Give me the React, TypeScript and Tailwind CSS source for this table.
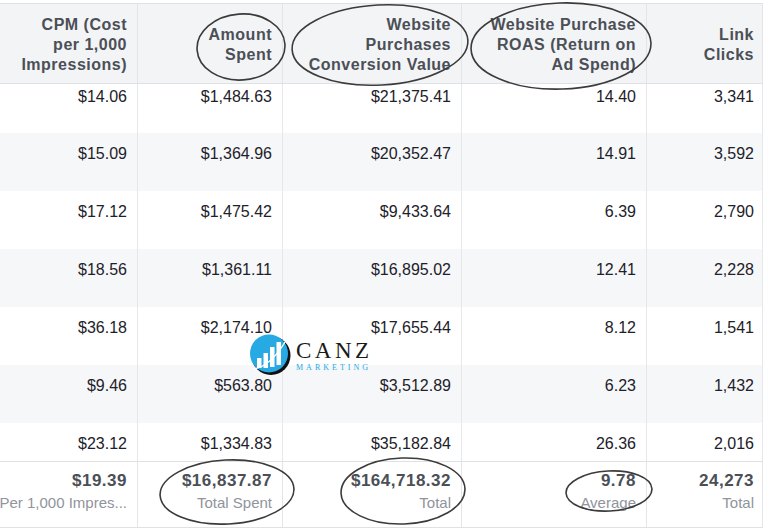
import React from 'react';

const cols = ['w-[138px]', 'w-[145px]', 'w-[179px]', 'w-[185px]', 'w-[116px]'];

const headers: string[][] = [
  ['CPM (Cost', 'per 1,000', 'Impressions)'],
  ['Amount', 'Spent'],
  ['Website', 'Purchases', 'Conversion Value'],
  ['Website Purchase', 'ROAS (Return on', 'Ad Spend)'],
  ['Link', 'Clicks'],
];

const rows: string[][] = [
  ['$14.06', '$1,484.63', '$21,375.41', '14.40', '3,341'],
  ['$15.09', '$1,364.96', '$20,352.47', '14.91', '3,592'],
  ['$17.12', '$1,475.42', '$9,433.64', '6.39', '2,790'],
  ['$18.56', '$1,361.11', '$16,895.02', '12.41', '2,228'],
  ['$36.18', '$2,174.10', '$17,655.44', '8.12', '1,541'],
  ['$9.46', '$563.80', '$3,512.89', '6.23', '1,432'],
  ['$23.12', '$1,334.83', '$35,182.84', '26.36', '2,016'],
];

const totals: [string, string][] = [
  ['$19.39', 'Per 1,000 Impres...'],
  ['$16,837.87', 'Total Spent'],
  ['$164,718.32', 'Total'],
  ['9.78', 'Average'],
  ['24,273', 'Total'],
];

// row heights: first row is partly scrolled under the header, last one is cut by the footer
const rowBox = (i: number) =>
  i === 0 ? 'h-[49px] pt-[4px]' : i === rows.length - 1 ? 'h-[38px] pt-[12px]' : 'h-[58px] pt-[12px]';

function Logo() {
  return (
    <div className="absolute left-[248px] top-[334px] flex items-center gap-[4px]">
      <svg width="44" height="42" viewBox="0 0 44 42">
        <circle cx="23" cy="21.5" r="19.5" fill="#111" />
        <circle cx="21" cy="19.5" r="19" fill="#27a9e3" />
        <rect x="9" y="24" width="4.5" height="10" fill="#fff" />
        <rect x="15.5" y="19" width="4.5" height="15" fill="#fff" />
        <rect x="22" y="13" width="4.5" height="20" fill="#fff" />
        <rect x="28.5" y="8" width="4.5" height="23" fill="#fff" />
        <path d="M5 35 Q22 33 37 8" stroke="#fff" strokeWidth="1.4" fill="none" />
      </svg>
      <div className="flex flex-col items-start font-['Liberation_Serif',serif] leading-none">
        <span className="text-[23px] tracking-[3.5px] text-[#1a1a1a]">CANZ</span>
        <span className="mt-[2px] text-[8px] tracking-[3px] text-[#27a9e3]">MARKETING</span>
      </div>
    </div>
  );
}

function Marks() {
  return (
    <svg
      className="pointer-events-none absolute left-0 top-0"
      width="768"
      height="528"
      viewBox="0 0 768 528"
      fill="none"
      stroke="#3b3b3b"
      strokeWidth="1.6"
    >
      <ellipse cx="241" cy="47" rx="44" ry="33" transform="rotate(-4 241 47)" />
      <ellipse cx="380" cy="45" rx="88" ry="40" transform="rotate(-3 380 45)" />
      <ellipse cx="561" cy="46" rx="90" ry="43" transform="rotate(-2 561 46)" />
      <ellipse cx="227" cy="492" rx="67" ry="32" transform="rotate(-3 227 492)" />
      <ellipse cx="403" cy="491" rx="62" ry="33" transform="rotate(-2 403 491)" />
      <ellipse cx="609" cy="491" rx="43" ry="20" transform="rotate(-3 609 491)" />
    </svg>
  );
}

export default function App() {
  return (
    <div className="relative h-[528px] w-[768px] overflow-hidden bg-white font-['Liberation_Sans',Arial,sans-serif]">
      <div className="h-[3px]" />
      <div className="w-[763px]">
        {/* Column headers */}
        <div className="flex h-[81px] border-y border-[#dfe1e5] bg-[#f3f4f6]">
          {headers.map((lines, c) => (
            <div
              key={c}
              className={`${cols[c]} flex flex-col items-end justify-center border-r border-[#e3e5e8] pt-[2px] ${c === 4 ? 'pr-[8px]' : 'pr-[10px]'} text-right text-[16px] font-bold leading-[20px] tracking-[0.5px] text-[#4b4f56]`}
            >
              {lines.map((l) => (
                <span key={l}>{l}</span>
              ))}
            </div>
          ))}
        </div>

        {/* Data rows */}
        {rows.map((r, i) => (
          <div key={i} className={`flex ${i % 2 === 1 ? 'bg-[#f6f7f9]' : 'bg-white'}`}>
            {r.map((v, c) => (
              <div
                key={c}
                className={`${cols[c]} ${rowBox(i)} border-r border-[#e6e7ea] ${c === 4 ? 'pr-[8px]' : 'pr-[10px]'} text-right text-[16px] leading-[18px] text-[#1d2129]`}
              >
                {v}
              </div>
            ))}
          </div>
        ))}

        {/* Totals */}
        <div className="flex h-[67px] border-y border-[#dfe1e5] bg-white">
          {totals.map(([v, sub], c) => (
            <div
              key={c}
              className={`${cols[c]} flex flex-col items-end border-r border-[#e3e5e8] pt-[8px] ${c === 4 ? 'pr-[8px]' : 'pr-[10px]'} text-right`}
            >
              <span className="text-[17px] font-bold leading-[22px] tracking-[0.5px] text-[#4b4f56]">{v}</span>
              <span className="whitespace-nowrap text-[15px] leading-[22px] text-[#90949c]">{sub}</span>
            </div>
          ))}
        </div>
      </div>

      <Logo />
      <Marks />
    </div>
  );
}
